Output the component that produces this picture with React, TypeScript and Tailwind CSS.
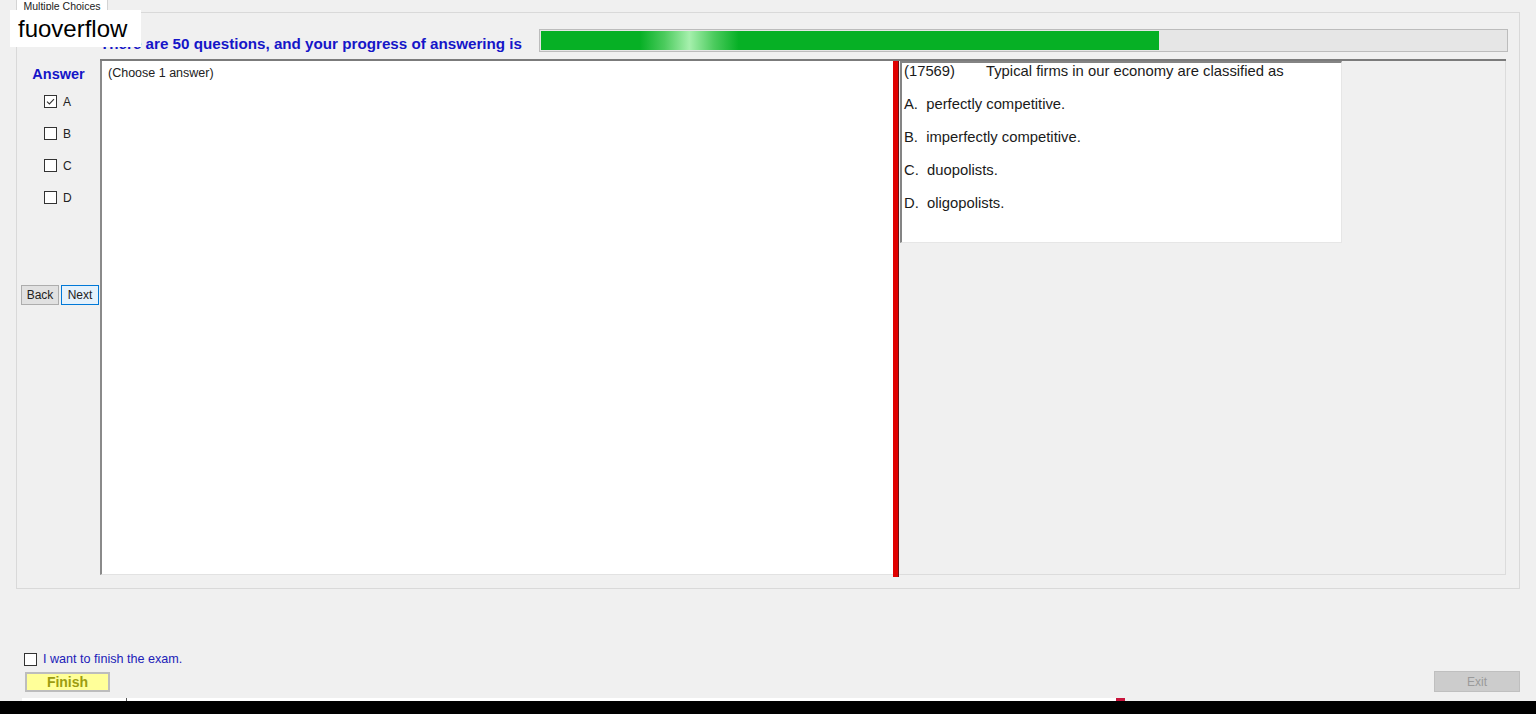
import React from 'react';

const Box = ({ checked = false }: { checked?: boolean }) => (
  <span className="w-[13px] h-[13px] border border-[#333333] bg-white flex items-center justify-center shrink-0">
    {checked && (
      <svg viewBox="0 0 11 11" className="w-[11px] h-[11px]">
        <path d="M2 5.6 L4.4 8 L9 3.2" stroke="#333333" strokeWidth="1.1" fill="none" />
      </svg>
    )}
  </span>
);

const options = ['A', 'B', 'C', 'D'];

const answers = [
  'A.  perfectly competitive.',
  'B.  imperfectly competitive.',
  'C.  duopolists.',
  'D.  oligopolists.',
];

export default function App() {
  return (
    <div className="relative w-[1536px] h-[714px] overflow-hidden bg-[#f0f0f0] flex flex-col font-['Liberation_Sans',Arial,sans-serif] text-black">
      {/* watermark */}
      <div className="absolute left-[10px] top-[10px] w-[131px] h-[37px] bg-white z-10 flex items-center pl-[8px] text-[24px] leading-none">
        fuoverflow
      </div>

      {/* tab header */}
      <div className="h-[12px] flex">
        <div className="ml-[16px] w-[92px] h-[13px] bg-white border-x border-[#d4d4d4] text-[10.5px] leading-[12px] text-center text-[#222222] whitespace-nowrap">
          Multiple Choices
        </div>
      </div>

      {/* tab panel */}
      <div className="mx-[16px] h-[577px] border border-[#d9d9d9] flex flex-col">
        <div className="h-[46px] flex items-start">
          <div className="ml-[83px] mt-[22px] text-[15.2px] leading-[18px] font-bold text-[#1515c8] whitespace-nowrap">
            There are 50 questions, and your progress of answering is
          </div>
          <div className="ml-auto mr-[11px] mt-[16px] w-[969px] h-[23px] bg-[#e6e6e6] border border-[#bcbcbc] p-px">
            <div className="h-full w-[64%] bg-[linear-gradient(90deg,#06b025_0%,#06b025_16%,#4ccb5e_20%,#a6f0ad_24%,#4ccb5e_28%,#06b025_32%,#06b025_100%)]" />
          </div>
        </div>

        <div className="h-[516px] flex">
          {/* answer column */}
          <div className="w-[83px] flex flex-col">
            <div className="mt-[7px] text-center text-[14.5px] leading-[17px] font-bold text-[#1515c8]">Answer</div>
            <div className="mt-[12px] pl-[27px] flex flex-col gap-[19px]">
              {options.map((o, i) => (
                <div key={o} className="flex items-center gap-[6px] h-[13px] text-[12px] text-[#222222]">
                  <Box checked={i === 0} />
                  <span>{o}</span>
                </div>
              ))}
            </div>
            <div className="mt-[81px] ml-[4px] flex gap-[2px]">
              <button className="w-[38px] h-[20px] bg-[#e1e1e1] border border-[#adadad] text-[12px] leading-none text-[#222222]">
                Back
              </button>
              <button className="w-[38px] h-[20px] bg-[#e5f1fb] border border-[#0078d7] text-[12px] leading-none text-[#222222]">
                Next
              </button>
            </div>
          </div>

          {/* main content */}
          <div className="w-[1406px] flex flex-col border-t-2 border-[#7b7b7b]">
            <div className="flex-1 flex">
              <div className="w-[793px] bg-white border-l-2 border-[#8a8a8a] border-b border-b-[#e2e2e2] pl-[6px] pt-[5px] text-[12.5px] leading-[14px] text-[#222222]">
                (Choose 1 answer)
              </div>
              <div className="w-[6px] bg-[#e00000] border-r border-[#6e1212] -mb-[2px]" />
              <div className="flex-1 bg-[#f0f0f0] border-r border-b border-[#dcdcdc]">
                <div className="ml-px w-[442px] h-[182px] bg-white border-t-2 border-l-2 border-[#848484] border-r border-b border-r-[#e6e6e6] border-b-[#e6e6e6] pl-[2px] text-[14.8px] leading-[17px] text-[#1a1a1a]">
                  <div className="flex whitespace-nowrap">
                    <span className="w-[82px]">(17569)</span>
                    <span>Typical firms in our economy are classified as</span>
                  </div>
                  {answers.map((a) => (
                    <div key={a} className="mt-[16px] whitespace-pre">
                      {a}
                    </div>
                  ))}
                </div>
              </div>
            </div>
          </div>
        </div>
      </div>

      {/* footer */}
      <div className="h-[108px] flex items-end justify-between pb-[5px] pl-[24px] pr-[16px]">
        <div className="flex flex-col">
          <label className="flex items-center gap-[6px] h-[14px] text-[12.6px] text-[#2121b8]">
            <Box />
            <span>I want to finish the exam.</span>
          </label>
          <button className="mt-[6px] ml-px w-[85px] h-[20px] bg-[#ffff99] border-2 border-[#bdbdbd] text-[14px] leading-none font-bold text-[#9c9c10]">
            Finish
          </button>
        </div>
        <button className="w-[86px] h-[21px] bg-[#cccccc] border border-[#bfbfbf] text-[12px] leading-none text-[#9a9a9a]">
          Exit
        </button>
      </div>

      {/* taskbar edge */}
      <div className="h-[4px] flex items-end">
        <div className="ml-[22px] w-[1103px] h-[3px] bg-white flex">
          <div className="ml-[104px] w-px h-[3px] bg-[#555555]" />
          <div className="ml-auto w-[9px] h-[3px] bg-[#c8143c]" />
        </div>
      </div>
      <div className="flex-1 bg-black" />
    </div>
  );
}
